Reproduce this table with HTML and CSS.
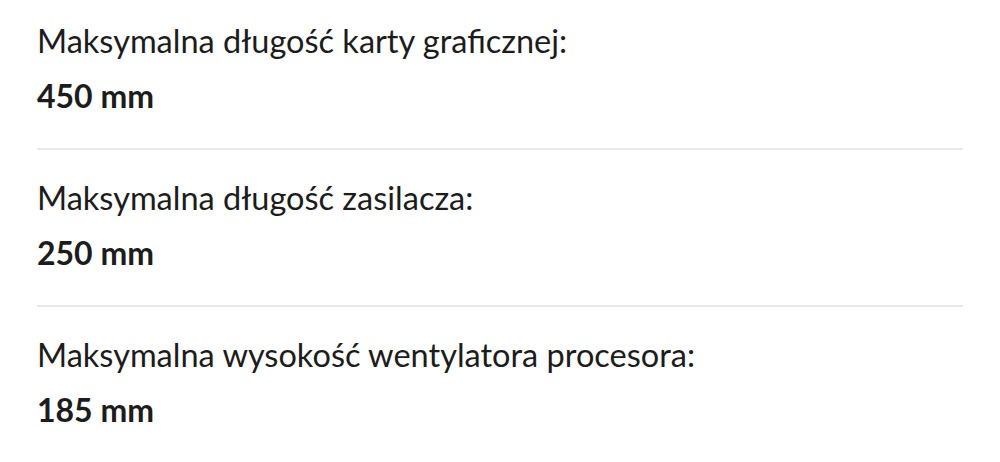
FILE: index.html
```html
<!DOCTYPE html>
<html lang="pl">
<head>
    <meta charset="UTF-8">
    <meta name="viewport" content="width=device-width, initial-scale=1.0">
    <title>Specyfikacja obudowy</title>
    <link rel="stylesheet" href="styles.css">
</head>
<body>
    <main class="spec-list">
        <div class="spec">
            <p class="spec-label">Maksymalna długość karty graficznej:</p>
            <p class="spec-value">450 mm</p>
        </div>
        <div class="spec">
            <p class="spec-label">Maksymalna długość zasilacza:</p>
            <p class="spec-value">250 mm</p>
        </div>
        <div class="spec">
            <p class="spec-label">Maksymalna wysokość wentylatora procesora:</p>
            <p class="spec-value">185 mm</p>
        </div>
    </main>
</body>
</html>
```

FILE: styles.css
```css
* {
    margin: 0;
    padding: 0;
    box-sizing: border-box;
}

body {
    background-color: #fff;
    color: #1c1c1c;
    font-family: 'Lato', sans-serif;
}

.spec-list {
    width: 926px;
    margin-left: 37px;
}

.spec {
    display: flex;
    flex-direction: column;
    gap: 15px;
    padding: 28px 0 32px;
    border-bottom: 2px solid #e8e8e8;
}

.spec:first-child {
    padding-top: 21px;
}

.spec:last-child {
    border-bottom: none;
}

.spec-label,
.spec-value {
    font-size: 32px;
    line-height: 40px;
}

.spec-label {
    font-size: 32.5px;
}

.spec-value {
    font-weight: bold;
}
```
